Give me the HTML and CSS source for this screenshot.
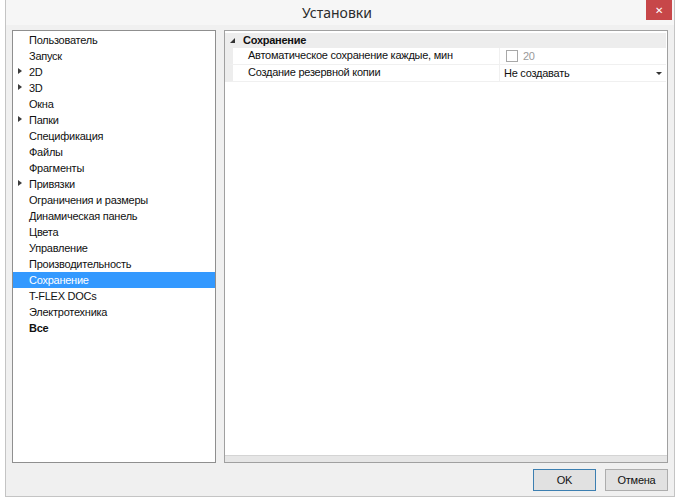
FILE: index.html
```html
<!DOCTYPE html>
<html>
<head>
<meta charset="utf-8">
<title>Установки</title>
<link rel="stylesheet" href="styles.css">
</head>
<body>
<div class="window">
	<div class="titlebar">
		<span class="title">Установки</span>
		<a class="close" href="#">&#x2715;</a>
	</div>
	<div class="content">
		<div class="tree">
			<div class="node">Пользователь</div>
			<div class="node">Запуск</div>
			<div class="node folder">2D</div>
			<div class="node folder">3D</div>
			<div class="node">Окна</div>
			<div class="node folder">Папки</div>
			<div class="node">Спецификация</div>
			<div class="node">Файлы</div>
			<div class="node">Фрагменты</div>
			<div class="node folder">Привязки</div>
			<div class="node">Ограничения и размеры</div>
			<div class="node">Динамическая панель</div>
			<div class="node">Цвета</div>
			<div class="node">Управление</div>
			<div class="node">Производительность</div>
			<div class="node selected">Сохранение</div>
			<div class="node">T-FLEX DOCs</div>
			<div class="node">Электротехника</div>
			<div class="node bold">Все</div>
		</div>
		<div class="props">
			<div class="grid">
				<div class="group"><span class="expand"></span>Сохранение</div>
				<div class="row">
					<div class="name">Автоматическое сохранение каждые, мин</div>
					<div class="value"><span class="check"></span><span class="muted">20</span></div>
				</div>
				<div class="row">
					<div class="name">Создание резервной копии</div>
					<div class="value combo">Не создавать<span class="drop"></span></div>
				</div>
			</div>
			<div class="splitter"></div>
		</div>
	</div>
	<div class="buttons">
		<button class="btn default">OK</button>
		<button class="btn">Отмена</button>
	</div>
</div>
</body>
</html>
```

FILE: styles.css
```css
body {
	margin: 0;
	background: #ffffff;
	font-family: "Liberation Sans", Arial, sans-serif;
	font-size: 11px;
	letter-spacing: -0.25px;
	color: #111111;
}
.window {
	margin-left: 5px;
	width: 668px;
	height: 496px;
	background: #f0f0f0;
	border: 1px solid #c4c4c4;
	border-top: none;
	display: flex;
	flex-direction: column;
}
.titlebar {
	height: 25px;
	background: #f6f6f6;
	position: relative;
	display: flex;
	align-items: center;
	justify-content: center;
}
.title {
	font-family: "Noto Sans", "Open Sans", sans-serif;
	font-size: 14px;
	letter-spacing: 0;
	color: #2b2b2b;
	margin-right: 6px;
}
.close {
	position: absolute;
	top: 0;
	right: 2px;
	width: 26px;
	height: 20px;
	background: #c74749;
	color: #ffffff;
	font-size: 10px;
	text-decoration: none;
	display: flex;
	align-items: center;
	justify-content: center;
}
.content {
	display: flex;
	gap: 8px;
	padding: 5px 6px 0 6px;
	height: 433px;
}
.tree {
	width: 202px;
	background: #ffffff;
	border: 1px solid #8f8f8f;
	padding-top: 1px;
}
.node {
	height: 16px;
	line-height: 16px;
	padding-left: 16px;
	position: relative;
	white-space: nowrap;
}
.folder::before {
	content: "";
	position: absolute;
	left: 5px;
	top: 4px;
	border-left: 4px solid #3c3c3c;
	border-top: 3.5px solid transparent;
	border-bottom: 3.5px solid transparent;
}
.selected {
	background: #3399ff;
	color: #ffffff;
}
.bold {
	font-weight: bold;
}
.props {
	flex: 1;
	background: #ffffff;
	border: 1px solid #a0a0a0;
	display: flex;
	flex-direction: column;
}
.grid {
	flex: 1;
	padding: 2px 1px 0 0;
}
.group {
	height: 15px;
	line-height: 15px;
	background: #ededed;
	font-weight: bold;
	padding-left: 18px;
	position: relative;
}
.expand {
	position: absolute;
	left: 5px;
	top: 5px;
	border-bottom: 5px solid #333333;
	border-left: 5px solid transparent;
}
.row {
	display: flex;
	height: 16px;
	line-height: 15px;
	border-left: 8px solid #ededed;
	border-bottom: 1px solid #f0f0f0;
}
.name {
	width: 251px;
	padding-left: 15px;
	border-right: 1px solid #f0f0f0;
	white-space: nowrap;
}
.value {
	flex: 1;
	padding-left: 4px;
	display: flex;
	align-items: center;
	position: relative;
}
.check {
	width: 10px;
	height: 10px;
	border: 1px solid #a8a8a8;
	margin: 0 5px 0 2px;
}
.muted {
	color: #9a9a9a;
}
.drop {
	position: absolute;
	right: 4px;
	top: 7px;
	border-top: 3px solid #333333;
	border-left: 3px solid transparent;
	border-right: 3px solid transparent;
}
.splitter {
	height: 6px;
	background: #e6e6e6;
	border-top: 1px solid #d4d4d4;
}
.buttons {
	display: flex;
	justify-content: flex-end;
	gap: 9px;
	padding: 6px 6px 0 0;
}
.btn {
	width: 63px;
	height: 22px;
	background: #e1e1e1;
	border: 1px solid #adadad;
	font-family: "Liberation Sans", Arial, sans-serif;
	font-size: 11px;
	letter-spacing: -0.25px;
	color: #111111;
	padding: 0;
}
.btn.default {
	border-color: #3c7fb1;
}
```
